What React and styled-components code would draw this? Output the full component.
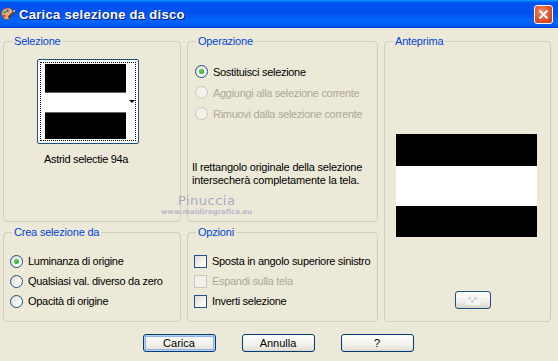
import React from 'react';
import styled, { createGlobalStyle } from 'styled-components';

const GlobalStyle = createGlobalStyle`
  html, body {
    margin: 0;
    padding: 0;
    background: #ECE9D8;
  }
  body {
    font-family: "Liberation Sans", Arial, sans-serif;
    font-size: 11px;
    color: #000;
  }
`;

const Window = styled.div`
  width: 558px;
  height: 361px;
  background: #ECE9D8;
  display: flex;
  flex-direction: column;
  overflow: hidden;
`;

const TitleBar = styled.div`
  height: 28px;
  flex: none;
  display: flex;
  align-items: center;
  padding: 0 5px 0 0;
  background: linear-gradient(180deg, #0997FF 0%, #0053EE 10%, #0050EE 45%, #0066FF 75%, #0058F0 92%, #003DD7 100%);
  color: #fff;
  box-sizing: border-box;
`;

const TitleText = styled.span`
  font-family: "Liberation Sans", Arial, sans-serif;
  font-weight: bold;
  font-size: 13px;
  letter-spacing: 0.3px;
  margin-left: 4px;
  text-shadow: 1px 1px 0 #0A1883;
  flex: 1;
`;

const CloseButton = styled.div`
  width: 19px;
  height: 19px;
  box-sizing: border-box;
  border: 1px solid #fff;
  border-radius: 3px;
  background: radial-gradient(circle at 40% 35%, #F0906F 0%, #E0522F 55%, #C33512 100%);
  display: flex;
  align-items: center;
  justify-content: center;
  margin-top: 1px;
`;

const Body = styled.div`
  display: grid;
  grid-template-columns: 178px 191px 167px;
  grid-template-rows: 187px 96px;
  column-gap: 6px;
  row-gap: 4px;
  padding: 7px 0 0 3px;
`;

const Group = styled.fieldset`
  margin: 0;
  padding: 0 6px 6px;
  border: 1px solid #D0D0BF;
  border-radius: 4px;
  min-width: 0;
  box-sizing: border-box;
  display: flex;
  flex-direction: column;
  position: relative;
  grid-column: ${p => p.$col};
  grid-row: ${p => p.$row};
`;

const Legend = styled.legend`
  color: #0046D5;
  padding: 0 2px;
  margin-left: 2px;
  line-height: 13px;
  font-size: 11px;
  letter-spacing: -0.2px;
`;

const Thumb = styled.div`
  width: 102px;
  height: 85px;
  box-sizing: border-box;
  border: 1px solid #1C5180;
  border-radius: 2px;
  background: #fff;
  margin: 11px 0 0 27px;
  padding: 2px;
  position: relative;
`;

const ThumbFocus = styled.div`
  height: 100%;
  box-sizing: border-box;
  border: 1px dotted #000;
  display: flex;
  padding: 1px 9px 1px 4px;
`;

const ThumbImage = styled.div`
  flex: 1;
  display: flex;
  flex-direction: column;
`;

const Stripe = styled.div`
  background: ${p => (p.$black ? '#000' : '#fff')};
  flex: ${p => p.$grow};
  border-bottom: ${p => (p.$line ? '1px solid #666' : 'none')};
`;

const DropArrow = styled.div`
  position: absolute;
  right: 3px;
  top: 40px;
  width: 0;
  height: 0;
  border-left: 3px solid transparent;
  border-right: 3px solid transparent;
  border-top: 3px solid #000;
`;

const Caption = styled.div`
  font-size: 11px;
  letter-spacing: -0.3px;
  margin: 9px 0 0 34px;
  white-space: nowrap;
`;

const Option = styled.label`
  display: flex;
  align-items: center;
  gap: 5px;
  height: ${p => p.$h || 21}px;
  font-size: 11px;
  letter-spacing: -0.3px;
  white-space: nowrap;
  color: ${p => (p.$disabled ? '#ACA899' : '#000')};
`;

const Radio = styled.span`
  width: 13px;
  height: 13px;
  box-sizing: border-box;
  border-radius: 50%;
  border: 1px solid ${p => (p.$disabled ? '#CAC8BB' : '#1C5180')};
  background: ${p => (p.$disabled ? '#F2F1EA' : 'linear-gradient(135deg, #DCD9D0 0%, #FFFFFF 80%)')};
  display: flex;
  align-items: center;
  justify-content: center;
  flex: none;
  &::after {
    content: '';
    width: 5px;
    height: 5px;
    border-radius: 50%;
    background: ${p => (p.$checked ? 'radial-gradient(circle at 35% 35%, #55D355, #21A121)' : 'transparent')};
  }
`;

const Check = styled.span`
  width: 13px;
  height: 13px;
  box-sizing: border-box;
  border: 1px solid ${p => (p.$disabled ? '#CAC8BB' : '#1C5180')};
  background: ${p => (p.$disabled ? '#F2F1EA' : 'linear-gradient(135deg, #DCD9D0 0%, #FFFFFF 80%)')};
  flex: none;
`;

const OptionList = styled.div`
  display: flex;
  flex-direction: column;
  margin: ${p => p.$top}px 0 0 ${p => p.$left}px;
`;

const Note = styled.p`
  margin: 37px 0 0 -2px;
  font-size: 11px;
  letter-spacing: -0.2px;
  line-height: 13px;
  white-space: nowrap;
`;

const Watermark = styled.div`
  position: absolute;
  left: -27px;
  top: 146px;
  display: flex;
  flex-direction: column;
  align-items: center;
  color: #A8ABC4;
  pointer-events: none;
`;

const WatermarkName = styled.span`
  font-family: "DejaVu Sans", sans-serif;
  font-size: 13px;
  line-height: 13px;
  letter-spacing: 0.5px;
`;

const WatermarkUrl = styled.span`
  font-family: "DejaVu Sans", sans-serif;
  font-size: 7px;
  line-height: 10px;
  font-weight: bold;
  color: #B8BACB;
`;

const Preview = styled.div`
  width: 141px;
  height: 103px;
  margin: 86px 0 0 5px;
  display: flex;
  flex-direction: column;
`;

const SmallButton = styled.div`
  width: 36px;
  height: 18px;
  box-sizing: border-box;
  border: 1px solid #1C5180;
  border-radius: 3px;
  background: linear-gradient(180deg, #FFFFFF 0%, #F0EFEA 60%, #D8D4C8 100%);
  margin: 54px 0 0 64px;
  display: flex;
  align-items: center;
  justify-content: center;
`;

const ButtonRow = styled.div`
  display: flex;
  justify-content: center;
  gap: 26px;
  margin-top: 12px;
  padding-right: 2px;
`;

const Button = styled.button`
  width: 73px;
  height: 18px;
  box-sizing: border-box;
  padding: 0;
  border: 1px solid #003C74;
  border-radius: 3px;
  font-family: "Liberation Sans", Arial, sans-serif;
  font-size: 11px;
  color: #000;
  background: linear-gradient(180deg, #FFFFFF 0%, #F4F3EE 50%, #E6E3D9 90%, #D6D0C5 100%);
  box-shadow: ${p => (p.$default ? 'inset 0 0 0 1px #B9D1FA, inset 0 0 0 2px #8FB0EA' : 'none')};
`;

function PaletteIcon() {
  return (
    <svg width="15" height="16" viewBox="0 0 16 16">
      <path d="M2 9 C0 4 6 0 11 2 C15 4 15 9 11 9 C9 9 9 11 10 13 C8 15 3 14 2 9 Z" fill="#E8A878" stroke="#8A4A20" strokeWidth="0.8" />
      <circle cx="5" cy="6" r="1.3" fill="#2E9E3A" />
      <circle cx="8" cy="4.5" r="1.3" fill="#2060D0" />
      <circle cx="4.5" cy="10" r="1.3" fill="#D03020" />
      <path d="M9 12 L15 5" stroke="#6B3A10" strokeWidth="1.6" />
      <path d="M14.5 5.5 L15.8 4" stroke="#E0E0E0" strokeWidth="1.6" />
    </svg>
  );
}

export default function App() {
  return (
    <>
      <GlobalStyle />
      <Window>
        <TitleBar>
          <PaletteIcon />
          <TitleText>Carica selezione da disco</TitleText>
          <CloseButton>
            <svg width="11" height="11" viewBox="0 0 11 11">
              <path d="M1.5 1.5 L9.5 9.5 M9.5 1.5 L1.5 9.5" stroke="#fff" strokeWidth="2" />
            </svg>
          </CloseButton>
        </TitleBar>

        <Body>
          <Group $col="1" $row="1">
            <Legend>Selezione</Legend>
            <Thumb>
              <ThumbFocus>
                <ThumbImage>
                  <Stripe $black $grow={30} $line />
                  <Stripe $grow={20} $line />
                  <Stripe $black $grow={28} />
                </ThumbImage>
              </ThumbFocus>
              <DropArrow />
            </Thumb>
            <Caption>Astrid selectie 94a</Caption>
          </Group>

          <Group $col="2" $row="1">
            <Legend>Operazione</Legend>
            <OptionList $top={13} $left={1}>
              <Option><Radio $checked />Sostituisci selezione</Option>
              <Option $disabled><Radio $disabled />Aggiungi alla selezione corrente</Option>
              <Option $disabled><Radio $disabled />Rimuovi dalla selezione corrente</Option>
            </OptionList>
            <Note>
              Il rettangolo originale della selezione<br />
              intersecherà completamente la tela.
            </Note>
            <Watermark>
              <WatermarkName>Pinuccia</WatermarkName>
              <WatermarkUrl>www.maidiregrafica.eu</WatermarkUrl>
            </Watermark>
          </Group>

          <Group $col="3" $row="1 / span 2">
            <Legend>Anteprima</Legend>
            <Preview>
              <Stripe $black $grow={32} />
              <Stripe $grow={40} />
              <Stripe $black $grow={31} />
            </Preview>
            <SmallButton>
              <svg width="14" height="10" viewBox="0 0 14 10">
                <rect x="0" y="0" width="14" height="10" fill="#F4F4F4" />
                <rect x="2" y="2" width="3" height="3" fill="#D8D8D8" />
                <rect x="8" y="2" width="3" height="3" fill="#D8D8D8" />
                <rect x="5" y="5" width="3" height="3" fill="#D8D8D8" />
              </svg>
            </SmallButton>
          </Group>

          <Group $col="1" $row="2">
            <Legend>Crea selezione da</Legend>
            <OptionList $top={12} $left={0}>
              <Option $h={20}><Radio $checked />Luminanza di origine</Option>
              <Option $h={20}><Radio />Qualsiasi val. diverso da zero</Option>
              <Option $h={20}><Radio />Opacità di origine</Option>
            </OptionList>
          </Group>

          <Group $col="2" $row="2">
            <Legend>Opzioni</Legend>
            <OptionList $top={12} $left={0}>
              <Option $h={20}><Check />Sposta in angolo superiore sinistro</Option>
              <Option $h={20} $disabled><Check $disabled />Espandi sulla tela</Option>
              <Option $h={20}><Check />Inverti selezione</Option>
            </OptionList>
          </Group>
        </Body>

        <ButtonRow>
          <Button $default>Carica</Button>
          <Button>Annulla</Button>
          <Button>?</Button>
        </ButtonRow>
      </Window>
    </>
  );
}
